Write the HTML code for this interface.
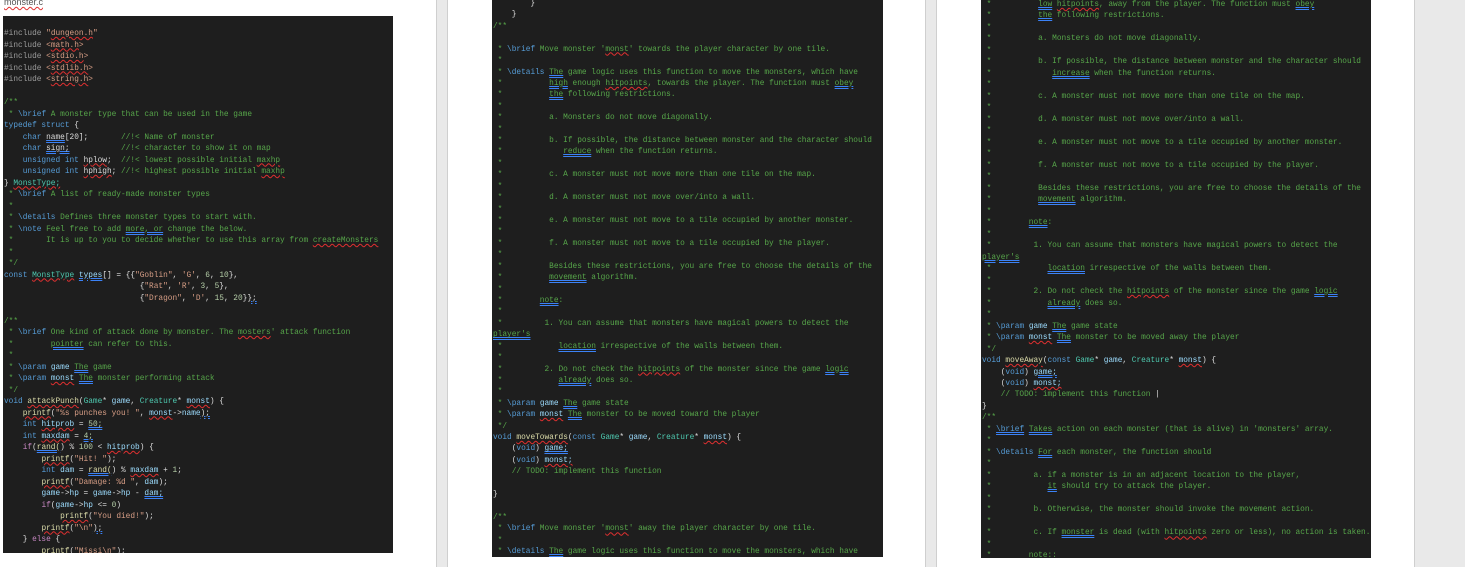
<!DOCTYPE html>
<html><head><meta charset="utf-8"><style>
body{margin:0;width:1465px;height:567px;overflow:hidden;background:#fff;position:relative;font-family:"Liberation Mono",monospace}
.g{position:absolute;top:0;height:567px;background:#e9e9e9;border-left:1px solid #cfcfcf;border-right:1px solid #cfcfcf;box-sizing:border-box}
.blk{position:absolute;background:#1e1e1e;overflow:hidden}
pre{margin:0;position:absolute;left:1px;font-size:7.8px;color:#dcdcdc;font-family:"Liberation Mono",monospace;white-space:pre}
.c{color:#57a64a}.k{color:#569cd6}.t{color:#4ec9b0}.v{color:#9cdcfe}.s{color:#d69d85}.p{color:#c586c0}.n{color:#b5cea8}.pp{color:#9b9b9b}.f{color:#dcdcaa}
.w{text-decoration:underline wavy #e03030;text-decoration-thickness:1px}
.u{text-decoration:underline double #3b82f6;text-decoration-thickness:1px}
</style></head><body>
<div style="position:absolute;left:4px;top:-3px;font-family:'Liberation Sans',sans-serif;font-size:9px;color:#555"><span class="w">monster.c</span></div>
<div class="g" style="left:436px;width:12px"></div>
<div class="g" style="left:925px;width:12px"></div>
<div class="g" style="left:1414px;width:51px;border-right:none"></div>

<div class="blk" style="left:3px;top:16px;width:390px;height:537px">
<pre style="top:13px;line-height:11.5px"><span class="pp">#include</span> <span class="s">"<span class="w">dungeon.h</span>"</span>
<span class="pp">#include</span> <span class="s">&lt;<span class="w">math.h</span>&gt;</span>
<span class="pp">#include</span> <span class="s">&lt;<span class="w">stdio.h</span>&gt;</span>
<span class="pp">#include</span> <span class="s">&lt;<span class="w">stdlib.h</span>&gt;</span>
<span class="pp">#include</span> <span class="s">&lt;<span class="w">string.h</span>&gt;</span>

<span class="c">/**</span>
<span class="c"> * <span class="k">\brief</span> A monster type that can be used in the game</span>
<span class="k">typedef struct</span> {
    <span class="k">char</span> <span class="u">name</span>[20];       <span class="c">//!&lt; Name of monster</span>
    <span class="k">char</span> <span class="u">sign;</span>           <span class="c">//!&lt; character to show it on map</span>
    <span class="k">unsigned int</span> <span class="w">hplow</span>;  <span class="c">//!&lt; lowest possible initial <span class="w">maxhp</span></span>
    <span class="k">unsigned int</span> <span class="w">hphigh</span>; <span class="c">//!&lt; highest possible initial <span class="w">maxhp</span></span>
} <span class="t w">MonstType;</span>
<span class="c"> * <span class="k">\brief</span> A list of ready-made monster types</span>
<span class="c"> *</span>
<span class="c"> * <span class="k">\details</span> Defines three monster types to start with.</span>
<span class="c"> * <span class="k">\note</span> Feel free to add <span class="u">more, or</span> change the below.</span>
<span class="c"> *       It is up to you to decide whether to use this array from <span class="w">createMonsters</span></span>
<span class="c"> *</span>
<span class="c"> */</span>
<span class="k">const</span> <span class="t w">MonstType</span> <span class="v u">types</span>[] = {{<span class="s">"Goblin"</span>, <span class="s">'G'</span>, <span class="n">6</span>, <span class="n">10</span>},
                             {<span class="s">"Rat"</span>, <span class="s">'R'</span>, <span class="n">3</span>, <span class="n">5</span>},
                             {<span class="s">"Dragon"</span>, <span class="s">'D'</span>, <span class="n">15</span>, <span class="n">20</span>}<span class="u">};</span>

<span class="c">/**</span>
<span class="c"> * <span class="k">\brief</span> One kind of attack done by monster. The <span class="w">mosters</span>' attack function</span>
<span class="c"> *        <span class="u">pointer</span> can refer to this.</span>
<span class="c"> *</span>
<span class="c"> * <span class="k">\param</span> <span class="v">game</span> <span class="u">The</span> game</span>
<span class="c"> * <span class="k">\param</span> <span class="v w">monst</span> <span class="u">The</span> monster performing attack</span>
<span class="c"> */</span>
<span class="k">void</span> <span class="f w">attackPunch</span>(<span class="t">Game</span>* <span class="v">game</span>, <span class="t">Creature</span>* <span class="v w">monst</span>) {
    <span class="f w">printf</span>(<span class="s">"%s punches you! "</span>, <span class="v w">monst</span>-&gt;<span class="v">name</span><span class="u">);</span>
    <span class="k">int</span> <span class="v w">hitprob</span> = <span class="n u">50;</span>
    <span class="k">int</span> <span class="v w">maxdam</span> = <span class="n u">4;</span>
    <span class="p">if</span>(<span class="f u">rand(</span>) % <span class="n">100</span> &lt; <span class="v w">hitprob</span>) {
        <span class="f w">printf</span>(<span class="s">"Hit! "</span>);
        <span class="k">int</span> <span class="v">dam</span> = <span class="f u">rand(</span>) % <span class="v w">maxdam</span> + <span class="n">1</span>;
        <span class="f w">printf</span>(<span class="s">"Damage: %d "</span>, <span class="v">dam</span>);
        <span class="v">game</span>-&gt;<span class="v">hp</span> = <span class="v">game</span>-&gt;<span class="v">hp</span> - <span class="v u">dam;</span>
        <span class="p">if</span>(<span class="v">game</span>-&gt;<span class="v">hp</span> &lt;= <span class="n">0</span>)
            <span class="f w">printf</span>(<span class="s">"You died!"</span>);
        <span class="f w">printf</span>(<span class="s">"\n"</span><span class="u">);</span>
    } <span class="p">else</span> {
        <span class="f w">printf</span>(<span class="s">"<span class="u">Missi</span>\n"</span>);</pre>
</div>

<div class="blk" style="left:492px;top:0;width:391px;height:557px">
<pre style="top:-1px;line-height:11.42px">        }
    }
<span class="c">/**</span>

<span class="c"> * <span class="k">\brief</span> Move monster '<span class="w">monst</span>' towards the player character by one tile.</span>
<span class="c"> *</span>
<span class="c"> * <span class="k">\details</span> <span class="u">The</span> game logic uses this function to move the monsters, which have</span>
<span class="c"> *          <span class="u">high</span> enough <span class="w">hitpoints</span>, towards the player. The function must <span class="u">obey</span></span>
<span class="c"> *          <span class="u">the</span> following restrictions.</span>
<span class="c"> *</span>
<span class="c"> *          a. Monsters do not move diagonally.</span>
<span class="c"> *</span>
<span class="c"> *          b. If possible, the distance between monster and the character should</span>
<span class="c"> *             <span class="u">reduce</span> when the function returns.</span>
<span class="c"> *</span>
<span class="c"> *          c. A monster must not move more than one tile on the map.</span>
<span class="c"> *</span>
<span class="c"> *          d. A monster must not move over/into a wall.</span>
<span class="c"> *</span>
<span class="c"> *          e. A monster must not move to a tile occupied by another monster.</span>
<span class="c"> *</span>
<span class="c"> *          f. A monster must not move to a tile occupied by the player.</span>
<span class="c"> *</span>
<span class="c"> *          Besides these restrictions, you are free to choose the details of the</span>
<span class="c"> *          <span class="u">movement</span> algorithm.</span>
<span class="c"> *</span>
<span class="c"> *        <span class="u">note</span>:</span>
<span class="c"> *</span>
<span class="c"> *         1. You can assume that monsters have magical powers to detect the</span>
<span class="c u">player's</span>
<span class="c"> *            <span class="u">location</span> irrespective of the walls between them.</span>
<span class="c"> *</span>
<span class="c"> *         2. Do not check the <span class="w">hitpoints</span> of the monster since the game <span class="u">logic</span></span>
<span class="c"> *            <span class="u">already</span> does so.</span>
<span class="c"> *</span>
<span class="c"> * <span class="k">\param</span> <span class="v">game</span> <span class="u">The</span> game state</span>
<span class="c"> * <span class="k">\param</span> <span class="v w">monst</span> <span class="u">The</span> monster to be moved toward the player</span>
<span class="c"> */</span>
<span class="k">void</span> <span class="f w">moveTowards</span>(<span class="k">const</span> <span class="t">Game</span>* <span class="v">game</span>, <span class="t">Creature</span>* <span class="v w">monst</span>) {
    (<span class="k">void</span>) <span class="v u">game;</span>
    (<span class="k">void</span>) <span class="v w">monst;</span>
    <span class="c">// TODO: implement this function</span>

}

<span class="c">/**</span>
<span class="c"> * <span class="k">\brief</span> Move monster '<span class="w">monst</span>' away the player character by one tile.</span>
<span class="c"> *</span>
<span class="c"> * <span class="k">\details</span> <span class="u">The</span> game logic uses this function to move the monsters, which have</span></pre>
</div>

<div class="blk" style="left:981px;top:0;width:390px;height:558px">
<pre style="top:0px;line-height:11.48px"><span class="c"> *          <span class="u">low</span> <span class="w">hitpoints</span>, away from the player. The function must <span class="u">obey</span></span>
<span class="c"> *          <span class="u">the</span> following restrictions.</span>
<span class="c"> *</span>
<span class="c"> *          a. Monsters do not move diagonally.</span>
<span class="c"> *</span>
<span class="c"> *          b. If possible, the distance between monster and the character should</span>
<span class="c"> *             <span class="u">increase</span> when the function returns.</span>
<span class="c"> *</span>
<span class="c"> *          c. A monster must not move more than one tile on the map.</span>
<span class="c"> *</span>
<span class="c"> *          d. A monster must not move over/into a wall.</span>
<span class="c"> *</span>
<span class="c"> *          e. A monster must not move to a tile occupied by another monster.</span>
<span class="c"> *</span>
<span class="c"> *          f. A monster must not move to a tile occupied by the player.</span>
<span class="c"> *</span>
<span class="c"> *          Besides these restrictions, you are free to choose the details of the</span>
<span class="c"> *          <span class="u">movement</span> algorithm.</span>
<span class="c"> *</span>
<span class="c"> *        <span class="u">note</span>:</span>
<span class="c"> *</span>
<span class="c"> *         1. You can assume that monsters have magical powers to detect the</span>
<span class="c u">player's</span>
<span class="c"> *            <span class="u">location</span> irrespective of the walls between them.</span>
<span class="c"> *</span>
<span class="c"> *         2. Do not check the <span class="w">hitpoints</span> of the monster since the game <span class="u">logic</span></span>
<span class="c"> *            <span class="u">already</span> does so.</span>
<span class="c"> *</span>
<span class="c"> * <span class="k">\param</span> <span class="v">game</span> <span class="u">The</span> game state</span>
<span class="c"> * <span class="k">\param</span> <span class="v w">monst</span> <span class="u">The</span> monster to be moved away the player</span>
<span class="c"> */</span>
<span class="k">void</span> <span class="f w">moveAway</span>(<span class="k">const</span> <span class="t">Game</span>* <span class="v">game</span>, <span class="t">Creature</span>* <span class="v w">monst</span>) {
    (<span class="k">void</span>) <span class="v u">game;</span>
    (<span class="k">void</span>) <span class="v w">monst;</span>
    <span class="c">// TODO: implement this function</span> |
}
<span class="c">/**</span>
<span class="c"> * <span class="k u">\brief</span> <span class="u">Takes</span> action on each monster (that is alive) in 'monsters' array.</span>
<span class="c"> *</span>
<span class="c"> * <span class="k">\details</span> <span class="u">For</span> each monster, the function should</span>
<span class="c"> *</span>
<span class="c"> *         a. if a monster is in an adjacent location to the player,</span>
<span class="c"> *            <span class="u">it</span> should try to attack the player.</span>
<span class="c"> *</span>
<span class="c"> *         b. Otherwise, the monster should invoke the movement action.</span>
<span class="c"> *</span>
<span class="c"> *         c. If <span class="u">monster</span> is dead (with <span class="w">hitpoints</span> zero or less), no action is taken.</span>
<span class="c"> *</span>
<span class="c"> *        <span class="u">note::</span></span></pre>
</div>
</body></html>
